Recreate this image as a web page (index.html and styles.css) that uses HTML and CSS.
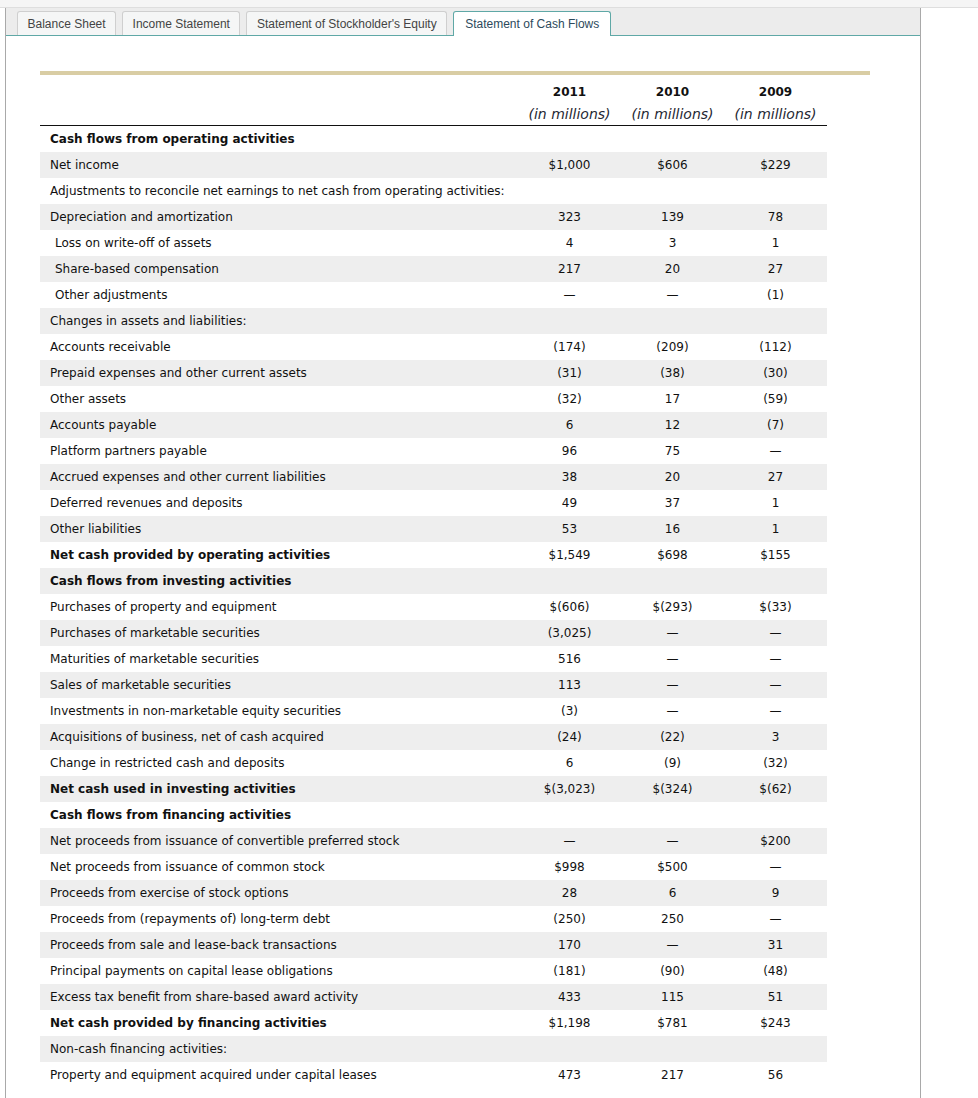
FILE: index.html
```html
<!DOCTYPE html>
<html>
<head>
<meta charset="utf-8">
<link rel="stylesheet" href="styles.css">
</head>
<body>
<div class="topstrip"></div>
<div class="panel">
  <div class="tabs">
    <div class="tab">Balance Sheet</div>
    <div class="tab">Income Statement</div>
    <div class="tab">Statement of Stockholder's Equity</div>
    <div class="tab active">Statement of Cash Flows</div>
  </div>
  <div class="content">
    <div class="goldbar"></div>
    <table class="cf">
      <colgroup><col class="c-label"><col class="c-val"><col class="c-val"><col class="c-val"></colgroup>
      <thead>
        <tr class="yr"><th></th><th>2011</th><th>2010</th><th>2009</th></tr>
        <tr class="unit"><th></th><th>(in millions)</th><th>(in millions)</th><th>(in millions)</th></tr>
      </thead>
      <tbody>
        <tr class="b"><td>Cash flows from operating activities</td><td></td><td></td><td></td></tr>
        <tr><td>Net income</td><td>$1,000</td><td>$606</td><td>$229</td></tr>
        <tr><td>Adjustments to reconcile net earnings to net cash from operating activities:</td><td></td><td></td><td></td></tr>
        <tr><td>Depreciation and amortization</td><td>323</td><td>139</td><td>78</td></tr>
        <tr class="ind"><td>Loss on write-off of assets</td><td>4</td><td>3</td><td>1</td></tr>
        <tr class="ind"><td>Share-based compensation</td><td>217</td><td>20</td><td>27</td></tr>
        <tr class="ind"><td>Other adjustments</td><td>—</td><td>—</td><td>(1)</td></tr>
        <tr><td>Changes in assets and liabilities:</td><td></td><td></td><td></td></tr>
        <tr><td>Accounts receivable</td><td>(174)</td><td>(209)</td><td>(112)</td></tr>
        <tr><td>Prepaid expenses and other current assets</td><td>(31)</td><td>(38)</td><td>(30)</td></tr>
        <tr><td>Other assets</td><td>(32)</td><td>17</td><td>(59)</td></tr>
        <tr><td>Accounts payable</td><td>6</td><td>12</td><td>(7)</td></tr>
        <tr><td>Platform partners payable</td><td>96</td><td>75</td><td>—</td></tr>
        <tr><td>Accrued expenses and other current liabilities</td><td>38</td><td>20</td><td>27</td></tr>
        <tr><td>Deferred revenues and deposits</td><td>49</td><td>37</td><td>1</td></tr>
        <tr><td>Other liabilities</td><td>53</td><td>16</td><td>1</td></tr>
        <tr class="b"><td>Net cash provided by operating activities</td><td>$1,549</td><td>$698</td><td>$155</td></tr>
        <tr class="b"><td>Cash flows from investing activities</td><td></td><td></td><td></td></tr>
        <tr><td>Purchases of property and equipment</td><td>$(606)</td><td>$(293)</td><td>$(33)</td></tr>
        <tr><td>Purchases of marketable securities</td><td>(3,025)</td><td>—</td><td>—</td></tr>
        <tr><td>Maturities of marketable securities</td><td>516</td><td>—</td><td>—</td></tr>
        <tr><td>Sales of marketable securities</td><td>113</td><td>—</td><td>—</td></tr>
        <tr><td>Investments in non-marketable equity securities</td><td>(3)</td><td>—</td><td>—</td></tr>
        <tr><td>Acquisitions of business, net of cash acquired</td><td>(24)</td><td>(22)</td><td>3</td></tr>
        <tr><td>Change in restricted cash and deposits</td><td>6</td><td>(9)</td><td>(32)</td></tr>
        <tr class="b"><td>Net cash used in investing activities</td><td>$(3,023)</td><td>$(324)</td><td>$(62)</td></tr>
        <tr class="b"><td>Cash flows from financing activities</td><td></td><td></td><td></td></tr>
        <tr><td>Net proceeds from issuance of convertible preferred stock</td><td>—</td><td>—</td><td>$200</td></tr>
        <tr><td>Net proceeds from issuance of common stock</td><td>$998</td><td>$500</td><td>—</td></tr>
        <tr><td>Proceeds from exercise of stock options</td><td>28</td><td>6</td><td>9</td></tr>
        <tr><td>Proceeds from (repayments of) long-term debt</td><td>(250)</td><td>250</td><td>—</td></tr>
        <tr><td>Proceeds from sale and lease-back transactions</td><td>170</td><td>—</td><td>31</td></tr>
        <tr><td>Principal payments on capital lease obligations</td><td>(181)</td><td>(90)</td><td>(48)</td></tr>
        <tr><td>Excess tax benefit from share-based award activity</td><td>433</td><td>115</td><td>51</td></tr>
        <tr class="b"><td>Net cash provided by financing activities</td><td>$1,198</td><td>$781</td><td>$243</td></tr>
        <tr><td>Non-cash financing activities:</td><td></td><td></td><td></td></tr>
        <tr><td>Property and equipment acquired under capital leases</td><td>473</td><td>217</td><td>56</td></tr>
      </tbody>
    </table>
  </div>
</div>
</body>
</html>
```
FILE: styles.css
```css
html, body {
  margin: 0;
  padding: 0;
  background: #fff;
}
.topstrip {
  height: 7px;
  background: #f5f5f5;
  border-bottom: 1px solid #dedede;
}
.panel {
  margin-left: 5px;
  width: 914px;
  border-left: 1px solid #a9a9a9;
  border-right: 1px solid #a9a9a9;
  min-height: 1090px;
}
.tabs {
  display: flex;
  gap: 6px;
  padding: 3px 0 0 11px;
  background: #ececec;
  border-bottom: 1px solid #5fa8a6;
  height: 24px;
}
.tab {
  font-family: "Liberation Sans", Arial, sans-serif;
  font-size: 12px;
  color: #444;
  background: #f5f6f6;
  border: 1px solid #cfcfcf;
  border-bottom: none;
  border-radius: 3px 3px 0 0;
  padding: 1px 9.5px 0;
  line-height: 23px;
  height: 24px;
  box-sizing: border-box;
}
.tab.active {
  background: #fff;
  color: #2d4a5c;
  border-color: #5fa8a6;
  height: 25px;
  margin-bottom: -1px;
  padding: 1px 11px 0;
}
.content {
  padding: 35px 0 40px 34px;
}
.goldbar {
  width: 830px;
  height: 4px;
  background: #d9cda4;
}
.cf {
  width: 787px;
  border-collapse: collapse;
  font-family: "DejaVu Sans", Verdana, sans-serif;
  font-size: 12px;
  color: #111;
}
.c-val { width: 103px; }
.cf th {
  font-weight: bold;
  text-align: center;
  padding: 0;
}
.cf tr.yr th {
  height: 24px;
  vertical-align: bottom;
  padding-bottom: 4px;
  font-size: 12px;
  color: #111;
}
.cf tr.unit th {
  font-weight: normal;
  font-style: italic;
  color: #1f2833;
  height: 22px;
  font-size: 14px;
  vertical-align: middle;
}
.cf thead tr.unit {
  border-bottom: 1px solid #111;
}
.cf td {
  height: 26px;
  padding: 0;
  text-align: center;
  white-space: nowrap;
}
.cf td:first-child {
  text-align: left;
  padding-left: 10px;
}
.cf tr.ind td:first-child {
  padding-left: 15px;
}
.cf tbody tr:nth-child(even) td {
  background: #eeeeee;
}
.cf tr.b td:first-child {
  font-weight: bold;
  font-size: 12px;
}
```
